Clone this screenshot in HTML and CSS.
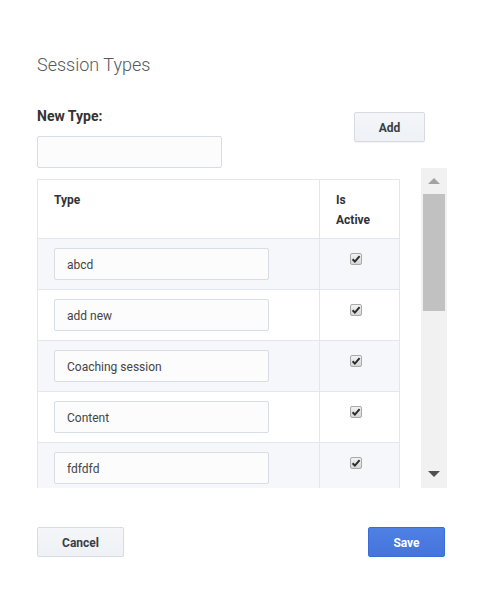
FILE: index.html
```html
<!DOCTYPE html>
<html>
<head>
<meta charset="utf-8">
<link rel="stylesheet" href="styles.css">
</head>
<body>
<div class="dialog">
  <h1 class="title">Session Types</h1>
  <div class="new-row">
    <div class="new-field">
      <label class="label">New Type:</label>
      <input class="text-input new-input" type="text">
    </div>
    <button class="btn btn-add">Add</button>
  </div>
  <div class="grid-area">
    <div class="viewport">
      <table class="types">
        <colgroup>
          <col class="c-type">
          <col class="c-active">
        </colgroup>
        <thead>
          <tr>
            <th>Type</th>
            <th><span class="stack">Is Active</span></th>
          </tr>
        </thead>
        <tbody>
          <tr class="shade"><td class="cell-input"><input class="text-input row-input" type="text" value="abcd"></td><td class="cell-check"><span class="check"><svg viewBox="0 0 12 12" width="12" height="12"><path d="M2.6 6.2 L4.9 8.6 L9.6 3.2" fill="none" stroke="#2b2b2b" stroke-width="2"/></svg></span></td></tr>
          <tr><td class="cell-input"><input class="text-input row-input" type="text" value="add new"></td><td class="cell-check"><span class="check"><svg viewBox="0 0 12 12" width="12" height="12"><path d="M2.6 6.2 L4.9 8.6 L9.6 3.2" fill="none" stroke="#2b2b2b" stroke-width="2"/></svg></span></td></tr>
          <tr class="shade"><td class="cell-input"><input class="text-input row-input" type="text" value="Coaching session"></td><td class="cell-check"><span class="check"><svg viewBox="0 0 12 12" width="12" height="12"><path d="M2.6 6.2 L4.9 8.6 L9.6 3.2" fill="none" stroke="#2b2b2b" stroke-width="2"/></svg></span></td></tr>
          <tr><td class="cell-input"><input class="text-input row-input" type="text" value="Content"></td><td class="cell-check"><span class="check"><svg viewBox="0 0 12 12" width="12" height="12"><path d="M2.6 6.2 L4.9 8.6 L9.6 3.2" fill="none" stroke="#2b2b2b" stroke-width="2"/></svg></span></td></tr>
          <tr class="shade"><td class="cell-input"><input class="text-input row-input" type="text" value="fdfdfd"></td><td class="cell-check"><span class="check"><svg viewBox="0 0 12 12" width="12" height="12"><path d="M2.6 6.2 L4.9 8.6 L9.6 3.2" fill="none" stroke="#2b2b2b" stroke-width="2"/></svg></span></td></tr>
          <tr><td class="cell-input"><input class="text-input row-input" type="text" value="Meeting"></td><td class="cell-check"><span class="check"><svg viewBox="0 0 12 12" width="12" height="12"><path d="M2.6 6.2 L4.9 8.6 L9.6 3.2" fill="none" stroke="#2b2b2b" stroke-width="2"/></svg></span></td></tr>
        </tbody>
      </table>
    </div>
    <div class="scrollbar">
      <div class="sb-btn"><span class="arrow-up"></span></div>
      <div class="sb-track">
        <div class="sb-thumb"></div>
      </div>
      <div class="sb-btn sb-btn-down"><span class="arrow-down"></span></div>
    </div>
  </div>
  <div class="footer">
    <button class="btn btn-cancel">Cancel</button>
    <button class="btn btn-save">Save</button>
  </div>
</div>
</body>
</html>
```
FILE: styles.css
```css
html, body {
  margin: 0;
  padding: 0;
  background: #ffffff;
}
body {
  font-family: Roboto, "Liberation Sans", sans-serif;
  color: #333;
}
.dialog {
  padding: 53px 45px 0 37px;
}
.title {
  margin: 0;
  font-size: 18px;
  line-height: 24px;
  font-weight: 300;
  color: #555a60;
}
.new-row {
  display: flex;
  justify-content: space-between;
  align-items: flex-start;
  margin-top: 29px;
}
.new-field {
  display: flex;
  flex-direction: column;
}
.label {
  font-size: 14px;
  line-height: 20px;
  font-weight: 700;
  color: #333;
}
.text-input {
  box-sizing: border-box;
  border: 1px solid #d8dde4;
  border-radius: 2px;
  background: #fcfcfd;
  font-family: Roboto, "Liberation Sans", sans-serif;
  font-size: 12px;
  color: #444;
  padding: 2px 12px 0 12px;
  outline: none;
}
.new-input {
  width: 185px;
  height: 32px;
  margin-top: 10px;
}
.btn {
  box-sizing: border-box;
  font-family: Roboto, "Liberation Sans", sans-serif;
  font-size: 12px;
  font-weight: 700;
  height: 30px;
  border-radius: 2px;
  padding: 2px 0 0 0;
  cursor: pointer;
}
.btn-add, .btn-cancel {
  background: linear-gradient(#f4f6f9, #eef1f5);
  border: 1px solid #d6dbe2;
  color: #3a3d42;
  box-shadow: 0 1px 1px rgba(0,0,0,0.05);
}
.btn-add {
  width: 71px;
  margin-top: 6px;
  margin-right: 22px;
}
.grid-area {
  display: flex;
  height: 320px;
}
.viewport {
  flex: 0 0 384px;
  height: 320px;
  overflow: hidden;
}
.types {
  margin-top: 11px;
  width: 362px;
  table-layout: fixed;
  border-collapse: collapse;
  border: 1px solid #e3e7ed;
  font-size: 12px;
}
.c-type {
  width: 282px;
}
.c-active {
  width: 80px;
}
.types th {
  text-align: left;
  font-weight: 700;
  color: #2f3236;
  line-height: 20px;
  padding: 10px 16px 8px 16px;
  vertical-align: top;
  border: 1px solid #e3e7ed;
}
.stack {
  display: block;
  width: min-content;
}
.types td {
  border: 1px solid #e3e7ed;
}
.shade td {
  background: #f5f7fa;
}
.cell-input {
  padding: 9px 16px;
}
.row-input {
  display: block;
  width: 215px;
  height: 32px;
}
.cell-check {
  vertical-align: top;
  text-align: center;
  padding: 14px 7px 0 0;
}
.check {
  display: inline-block;
  box-sizing: border-box;
  width: 12px;
  height: 12px;
  border: 1px solid #a9a9a9;
  border-radius: 2px;
  background: linear-gradient(#f2f2f2, #d6d6d6);
  vertical-align: top;
}
.check svg {
  display: block;
  margin: -1px;
}
.scrollbar {
  flex: 0 0 26px;
  height: 320px;
  background: #f1f1f1;
  display: flex;
  flex-direction: column;
}
.sb-btn {
  height: 26px;
  display: flex;
  align-items: center;
  justify-content: center;
}
.sb-btn-down {
  height: 28px;
}
.arrow-up {
  width: 0;
  height: 0;
  border-left: 6px solid transparent;
  border-right: 6px solid transparent;
  border-bottom: 6px solid #a3a3a3;
}
.arrow-down {
  width: 0;
  height: 0;
  border-left: 6px solid transparent;
  border-right: 6px solid transparent;
  border-top: 6px solid #505050;
}
.sb-track {
  flex: 1;
  padding: 0 2px;
}
.sb-thumb {
  height: 117px;
  background: #c1c1c1;
}
.footer {
  display: flex;
  justify-content: space-between;
  margin-top: 39px;
  padding-right: 2px;
}
.btn-cancel {
  width: 87px;
}
.btn-save {
  width: 77px;
  background: linear-gradient(#4f80e3, #4574dc);
  border: 1px solid #3b6bd6;
  color: #ffffff;
}
```
